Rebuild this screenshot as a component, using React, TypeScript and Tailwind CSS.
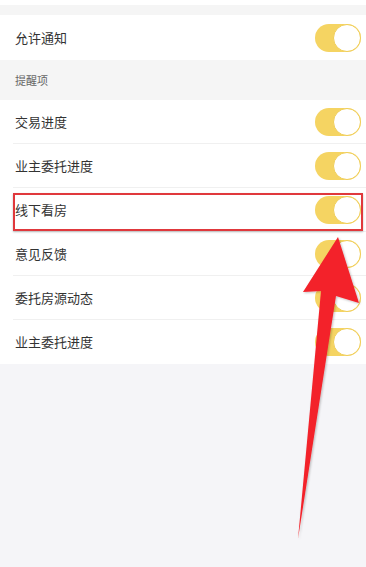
import React from 'react';

const reminders = ['交易进度', '业主委托进度', '线下看房', '意见反馈', '委托房源动态', '业主委托进度'];

const Toggle = () => (
  <div className="w-[46px] h-[28px] rounded-full bg-[#f5d462] flex items-center justify-end">
    <div className="w-[28px] h-[28px] rounded-full bg-white border-[1.5px] border-[#f0cd55]" />
  </div>
);

const Row = ({ label, last }: { label: string; last?: boolean }) => (
  <div className="h-[44px] flex items-center justify-between pl-[15px] pr-[5px] relative">
    <span className="text-[13px] text-[#333]">{label}</span>
    <Toggle />
    {!last && <div className="absolute left-[13px] right-0 bottom-0 h-px bg-[#f0f0f0]" />}
  </div>
);

const App = () => {
  return (
    <div
      className="w-[366px] h-[567px] bg-[#f5f5f8] relative overflow-hidden"
      style={{ fontFamily: '"Noto Sans CJK SC", "Noto Sans", sans-serif' }}
    >
      <div className="h-[5px] bg-white" />
      <div className="h-[10px] bg-[#f5f5f5]" />
      <div className="bg-white h-[45px] flex items-center justify-between pl-[15px] pr-[5px]">
        <span className="text-[13px] text-[#333]">允许通知</span>
        <Toggle />
      </div>
      <div className="h-[40px] bg-[#f5f5f5] flex items-center pl-[15px]">
        <span className="text-[11px] text-[#666]">提醒项</span>
      </div>
      <div className="bg-white">
        {reminders.map((r, i) => (
          <Row key={i} label={r} last={i === reminders.length - 1} />
        ))}
      </div>

      {/* annotation box */}
      <div className="absolute left-[13px] top-[193px] w-[350px] h-[38px] border-2 border-[#e0383c] shadow-[0_1px_2px_rgba(0,0,0,0.25)]" />

      {/* annotation arrow */}
      <svg className="absolute left-0 top-0" width="366" height="567" viewBox="0 0 366 567">
        <defs>
          <filter id="sh" x="-20%" y="-20%" width="140%" height="140%">
            <feDropShadow dx="1" dy="1" stdDeviation="1" floodColor="#000" floodOpacity="0.25" />
          </filter>
        </defs>
        <polygon
          points="338,237 359,303 336,296 298,539 321,291 303,292"
          fill="#f3222a"
          filter="url(#sh)"
        />
      </svg>
    </div>
  );
};

export default App;
